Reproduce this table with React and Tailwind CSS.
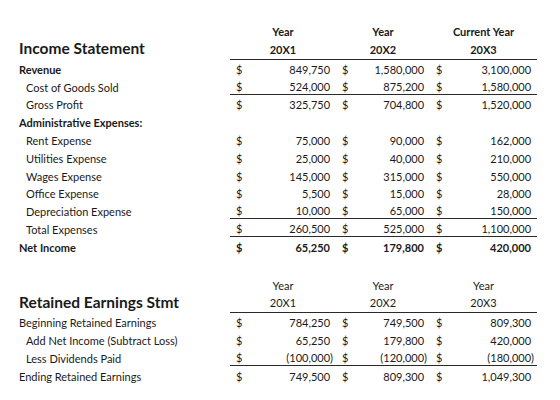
import React from "react";

const cols = "grid grid-cols-[211px_106px_94px_107px]";

const incomeRows = [
    { label: "Revenue", bold: true, values: ["849,750", "1,580,000", "3,100,000"] },
    { label: "Cost of Goods Sold", indent: true, values: ["524,000", "875,200", "1,580,000"], line: true },
    { label: "Gross Profit", indent: true, values: ["325,750", "704,800", "1,520,000"] },
    { label: "Administrative Expenses:", bold: true },
    { label: "Rent Expense", indent: true, values: ["75,000", "90,000", "162,000"] },
    { label: "Utilities Expense", indent: true, values: ["25,000", "40,000", "210,000"] },
    { label: "Wages Expense", indent: true, values: ["145,000", "315,000", "550,000"] },
    { label: "Office Expense", indent: true, values: ["5,500", "15,000", "28,000"] },
    { label: "Depreciation Expense", indent: true, values: ["10,000", "65,000", "150,000"], line: true },
    { label: "Total Expenses", indent: true, values: ["260,500", "525,000", "1,100,000"], line: true },
    { label: "Net Income", bold: true, values: ["65,250", "179,800", "420,000"], boldValues: true },
];

const retainedRows = [
    { label: "Beginning Retained Earnings", values: ["784,250", "749,500", "809,300"] },
    { label: "Add Net Income (Subtract Loss)", indent: true, values: ["65,250", "179,800", "420,000"] },
    { label: "Less Dividends Paid", indent: true, values: ["(100,000)", "(120,000)", "(180,000)"], line: true },
    { label: "Ending Retained Earnings", values: ["749,500", "809,300", "1,049,300"] },
];

function Amount({ value, line, bold }) {
    const negative = value.startsWith("(");
    return (
        <div
            className={`flex items-end justify-between pl-[6px] pr-[3px] leading-[14px] ${
                line ? "border-b-[1.5px] border-[#2a2a2a]" : ""
            } ${bold ? "font-bold" : ""}`}
        >
            <span>$</span>
            <span>
                {value}
                {!negative && <span className="invisible">)</span>}
            </span>
        </div>
    );
}

function Row({ row }) {
    return (
        <div className={`${cols} h-[17.8px]`}>
            <div
                className={`flex items-end leading-[14px] ${row.indent ? "pl-[7px]" : ""} ${
                    row.bold ? "font-bold" : ""
                }`}
            >
                {row.label}
            </div>
            {row.values
                ? row.values.map((v, i) => (
                      <Amount key={i} value={v} line={row.line} bold={row.boldValues} />
                  ))
                : null}
        </div>
    );
}

function Header({ title, years, bold }) {
    return (
        <>
            <div className={`${cols} h-[17.8px]`}>
                <div></div>
                {years.map((y, i) => (
                    <div key={i} className={`flex items-center justify-center ${bold ? "font-bold" : ""}`}>
                        {y[0]}
                    </div>
                ))}
            </div>
            <div className={`${cols} h-[17.8px]`}>
                <div className="flex items-end text-[15.5px] font-bold leading-none pb-[3px]">{title}</div>
                {years.map((y, i) => (
                    <div
                        key={i}
                        className={`flex items-center justify-center border-b-[1.5px] border-[#2a2a2a] ${
                            bold ? "font-bold" : ""
                        }`}
                    >
                        {y[1]}
                    </div>
                ))}
            </div>
        </>
    );
}

export default function App() {
    return (
        <div
            className="w-[560px] h-[400px] bg-white text-[#1a1a1a] text-[11px] pl-[19px] pt-[23.5px]"
            style={{ fontFamily: "Lato, 'Liberation Sans', sans-serif" }}
        >
            <Header
                title="Income Statement"
                bold
                years={[
                    ["Year", "20X1"],
                    ["Year", "20X2"],
                    ["Current Year", "20X3"],
                ]}
            />
            {incomeRows.map((r, i) => (
                <Row key={i} row={r} />
            ))}
            <div className="h-[22px]"></div>
            <Header
                title="Retained Earnings Stmt"
                years={[
                    ["Year", "20X1"],
                    ["Year", "20X2"],
                    ["Year", "20X3"],
                ]}
            />
            {retainedRows.map((r, i) => (
                <Row key={i} row={r} />
            ))}
        </div>
    );
}
